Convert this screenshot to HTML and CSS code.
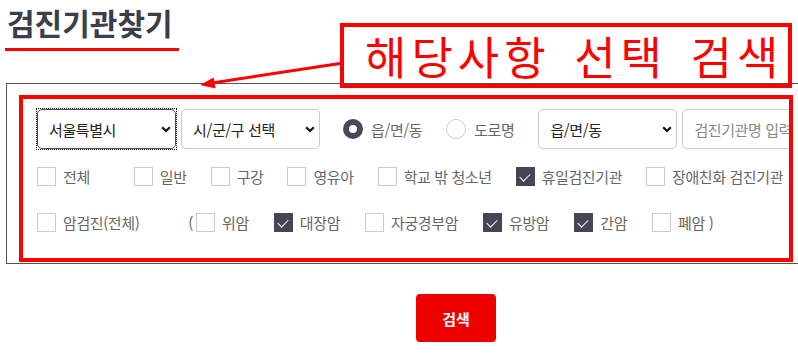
FILE: index.html
```html
<!DOCTYPE html>
<html lang="ko">

<head>
    <meta charset="UTF-8">
    <meta name="viewport" content="width=device-width, initial-scale=1.0">
    <title>검진기관찾기</title>
    <link rel="stylesheet" href="styles.css">
</head>

<body>
    <div class="page">
        <h2 class="title">검진기관찾기</h2>

        <!-- 안내 말풍선 -->
        <div class="callout">해당사항 선택 검색</div>
        <svg class="arrow" width="400" height="100" viewBox="0 0 400 100">
            <line x1="337" y1="63" x2="206" y2="83" stroke="#f00" stroke-width="3" />
            <polygon points="194,85 209.6,88.6 207.6,77.4" fill="#f00" />
        </svg>

        <div class="search-box">
            <div class="search-inner">
                <div class="row row-top">
                    <span class="sel focus">
                        <select>
                            <option>서울특별시</option>
                        </select>
                        <svg class="chev" width="10" height="7" viewBox="0 0 10 7"><path d="M1.2 1.2 L5 5 L8.8 1.2" fill="none" stroke="#111" stroke-width="2.2" /></svg>
                    </span>
                    <span class="sel">
                        <select>
                            <option>시/군/구 선택</option>
                        </select>
                        <svg class="chev" width="10" height="7" viewBox="0 0 10 7"><path d="M1.2 1.2 L5 5 L8.8 1.2" fill="none" stroke="#111" stroke-width="2.2" /></svg>
                    </span>
                    <label class="radio on"><i></i>읍/면/동</label>
                    <label class="radio"><i></i>도로명</label>
                    <span class="sel">
                        <select>
                            <option>읍/면/동</option>
                        </select>
                        <svg class="chev" width="10" height="7" viewBox="0 0 10 7"><path d="M1.2 1.2 L5 5 L8.8 1.2" fill="none" stroke="#111" stroke-width="2.2" /></svg>
                    </span>
                    <input class="keyword" type="text" placeholder="검진기관명 입력">
                </div>

                <div class="row row-check">
                    <label class="chk first"><i></i>전체</label>
                    <label class="chk"><i></i>일반</label>
                    <label class="chk"><i></i>구강</label>
                    <label class="chk"><i></i>영유아</label>
                    <label class="chk"><i></i>학교 밖 청소년</label>
                    <label class="chk on"><i></i>휴일검진기관</label>
                    <label class="chk"><i></i>장애친화 검진기관</label>
                </div>

                <div class="row row-check row-cancer">
                    <label class="chk first"><i></i>암검진(전체)</label>
                    <label class="chk sub"><span class="paren">(</span><i></i>위암</label>
                    <label class="chk on"><i></i>대장암</label>
                    <label class="chk"><i></i>자궁경부암</label>
                    <label class="chk on"><i></i>유방암</label>
                    <label class="chk on"><i></i>간암</label>
                    <label class="chk"><i></i>폐암 )</label>
                </div>
            </div>
        </div>

        <div class="btn-wrap">
            <button class="btn-search">검색</button>
        </div>
    </div>
</body>

</html>
```

FILE: styles.css
```css
* {
    padding: 0;
    margin: 0;
    box-sizing: border-box;
}

html,
body {
    overflow: hidden;
    background: #fff;
}

body {
    font-family: "Noto Sans CJK KR", "Noto Sans", sans-serif;
    color: #333;
}

.page {
    position: relative;
    width: 900px;
    margin-left: 6px;
}

.title {
    display: inline-block;
    margin: 3px 0 0 -1px;
    padding: 0 6px 7px 2px;
    font-size: 30px;
    line-height: 38px;
    letter-spacing: 0;
    font-weight: bold;
    color: #3b3e4b;
    border-bottom: 3px solid #f00;
}

/* 안내 표시 */
.callout {
    position: absolute;
    left: 334px;
    top: 23px;
    width: 452px;
    height: 65px;
    border: 4px solid #f00;
    display: flex;
    align-items: center;
    padding-left: 21px;
    font-size: 45px;
    line-height: 1;
    letter-spacing: 5px;
    word-spacing: 6px;
    color: #f00;
    white-space: nowrap;
}

.arrow {
    position: absolute;
    left: 0;
    top: 0;
}

.search-box {
    margin-top: 32px;
    border: 1px solid #555;
    padding: 11px 12px 1px;
}

.search-inner {
    width: 774px;
    border: 4px solid #f00;
    padding: 10px 0 21px 14px;
    overflow: hidden;
}

.row {
    display: flex;
    align-items: center;
    white-space: nowrap;
}

.row-top {
    height: 40px;
}

.sel {
    position: relative;
    width: 139px;
    height: 40px;
    margin-right: 5px;
    flex-shrink: 0;
}

.sel select {
    appearance: none;
    width: 100%;
    height: 100%;
    border: 1px solid #ccc;
    border-radius: 5px;
    background: #fff;
    padding-left: 11px;
    font-family: inherit;
    font-size: 15px;
    letter-spacing: -0.4px;
    color: #222;
    outline: none;
}

.sel.focus {
    outline: 1px dotted #111;
    outline-offset: 0;
}

.sel.focus select {
    border-color: #4a4d5a;
}

.sel .chev {
    position: absolute;
    right: 5px;
    top: 17px;
}

.radio {
    display: flex;
    align-items: center;
    gap: 8px;
    font-size: 15px;
    letter-spacing: -0.4px;
    color: #666;
    margin-right: 24px;
}

.radio:first-of-type {
    margin-left: 18px;
}

.radio i {
    width: 20px;
    height: 20px;
    border-radius: 50%;
    border: 1px solid #ccc;
    background: #fff;
}

.radio.on i {
    border: 6px solid #464958;
}

.keyword {
    width: 200px;
    height: 40px;
    border: 1px solid #ccc;
    border-radius: 5px;
    padding-left: 11px;
    font-family: inherit;
    font-size: 15px;
    letter-spacing: -0.4px;
    flex-shrink: 0;
}

.keyword::placeholder {
    color: #888;
}

.row-check {
    height: 30px;
    gap: 24px;
    margin-top: 12px;
}

.row-check + .row-check {
    margin-top: 16px;
}

.row-cancer {
    gap: 25px;
}

.chk {
    display: flex;
    align-items: center;
    font-size: 15px;
    letter-spacing: -0.4px;
    color: #666;
}

.chk.first {
    margin-right: 20px;
}

.chk.sub {
    margin-left: 4px;
}

.chk i {
    position: relative;
    width: 19px;
    height: 19px;
    border: 1px solid #ccc;
    background: #fff;
    margin-right: 7px;
}

.chk.on i {
    border-color: #444656;
    background: #444656;
}

/* 체크 표시 */
.chk.on i::after {
    content: "";
    position: absolute;
    left: 5px;
    top: 3px;
    width: 5px;
    height: 9px;
    border-right: 1.5px solid #fff;
    border-bottom: 1.5px solid #fff;
    transform: rotate(45deg);
}

.paren {
    margin-right: 3px;
}

.btn-wrap {
    text-align: center;
    margin-top: 30px;
}

.btn-search {
    width: 80px;
    height: 48px;
    border: none;
    border-radius: 4px;
    background: #ef0000;
    color: #fff;
    font-family: inherit;
    font-size: 15px;
    font-weight: bold;
    cursor: pointer;
}
```
